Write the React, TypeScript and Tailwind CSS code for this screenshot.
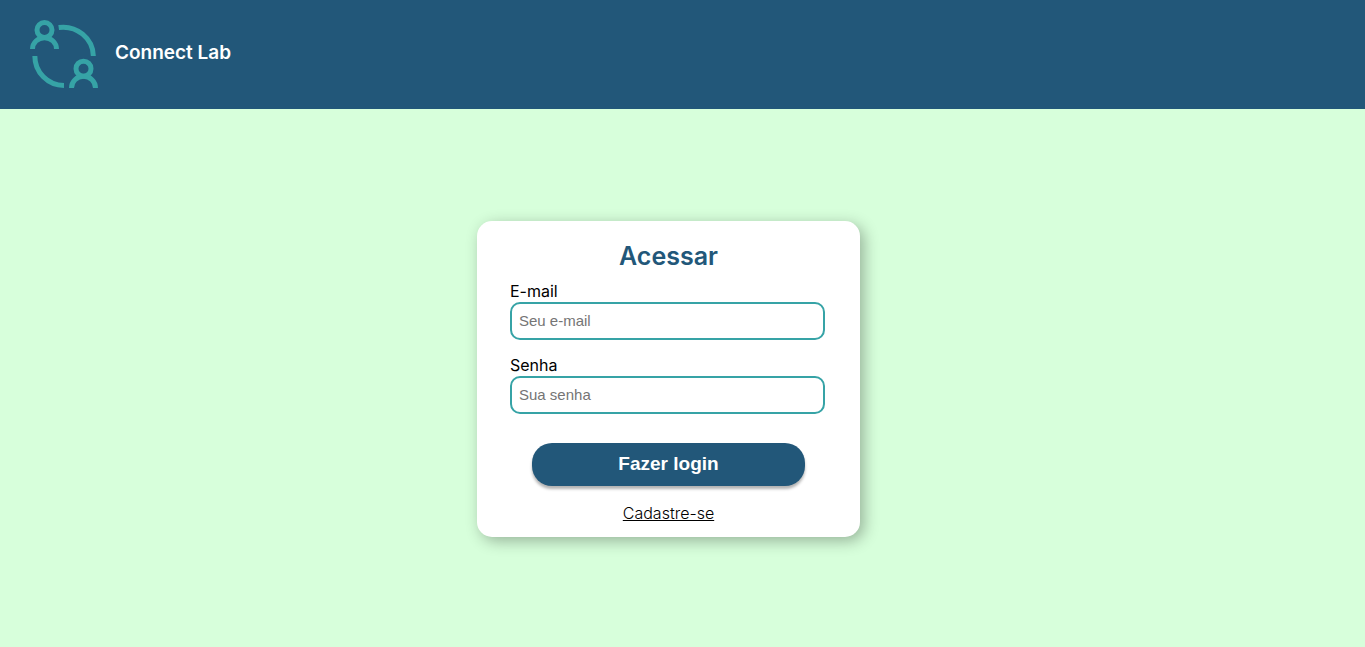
import React from "react";

function Logo() {
  return (
    <svg
      className="size-[68px]"
      viewBox="0 0 204 204"
      fill="none"
      stroke="#36a3a6"
      strokeWidth="15"
      aria-hidden="true"
    >
      <circle cx="43.5" cy="30" r="22.5" />
      <path d="M7.500 87a36 34 0 0 1 72 0" />
      <circle cx="160.5" cy="146" r="22.5" />
      <path d="M124.500 204a36 35 0 0 1 72 0" />
      <path d="M86 22.500A91 88 0 0 1 190 108" />
      <path d="M14.500 108A88 88 0 0 0 102 196.500" />
    </svg>
  );
}

type FieldProps = {
  id: string;
  label: string;
  type: string;
  placeholder: string;
};

function Field({ id, label, type, placeholder }: FieldProps) {
  return (
    <div className="flex flex-col">
      <label htmlFor={id} className="text-base leading-[21px]">
        {label}
      </label>
      <input
        id={id}
        type={type}
        placeholder={placeholder}
        className="h-[38px] w-full rounded-[10px] border-2 border-[#36a3a6] px-[7px] pb-0.5 font-['Liberation_Sans',sans-serif] text-[15px] placeholder:text-[#757575]"
      />
    </div>
  );
}

export default function App() {
  return (
    <div className="flex min-h-screen flex-col bg-[#d7ffdb] font-['Inter',sans-serif] text-black">
      <header className="flex items-center gap-[17px] bg-[#225779] px-[30px] pt-5 pb-[21px]">
        <Logo />
        <span className="pb-0.5 text-[19px] leading-6 font-semibold text-white">Connect Lab</span>
      </header>
      <main className="flex flex-1 items-center justify-center pt-0.5 pr-7">
        <form
          className="flex w-[383px] flex-col rounded-[15px] bg-white px-[33px] pt-[19px] pb-3 shadow-[4px_4px_15px_rgba(0,0,0,0.3)]"
          onSubmit={(event) => event.preventDefault()}
        >
          <h1 className="mb-[9px] text-center text-[25px] leading-8 font-semibold text-[#225779]">
            Acessar
          </h1>
          <div className="flex flex-col gap-[15px] pr-0.5">
            <Field id="email" label="E-mail" type="email" placeholder="Seu e-mail" />
            <Field id="senha" label="Senha" type="password" placeholder="Sua senha" />
          </div>
          <button
            type="submit"
            className="mx-auto mt-[29px] mb-[15px] h-[43px] w-[273px] rounded-[20px] bg-[#225779] pb-0.5 font-['Liberation_Sans',sans-serif] text-[19px] leading-6 font-bold text-white shadow-[0_3px_3px_rgba(0,0,0,0.3)]"
          >
            Fazer login
          </button>
          <a href="#cadastro" className="self-center font-light underline">
            Cadastre-se
          </a>
        </form>
      </main>
    </div>
  );
}
